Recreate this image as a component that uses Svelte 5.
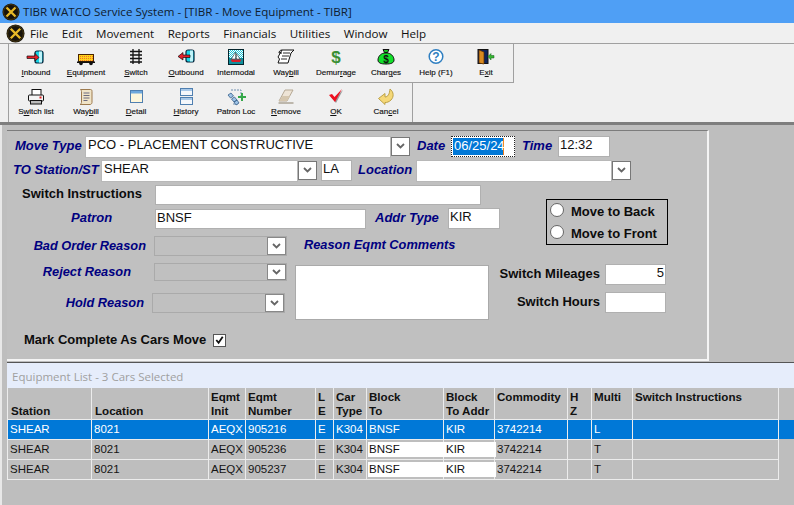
<script>
  const menu = ['File', 'Edit', 'Movement', 'Reports', 'Financials', 'Utilities', 'Window', 'Help'];
  const row1 = [
    ['inbound', '', 'I', 'nbound'], ['car', '', 'E', 'quipment'], ['switch', '', 'S', 'witch'], ['outbound', '', 'O', 'utbound'],
    ['boat', 'Intermodal', '', ''], ['scroll', 'Way', 'b', 'ill'], ['dollar', 'Demur', 'r', 'age'], ['bag', 'Char', 'g', 'es'],
    ['help', 'Help (F1)', '', ''], ['exit', 'E', 'x', 'it']
  ];
  const row2 = [
    ['printer', 'S', 'w', 'itch list'], ['tan', 'Way', 'b', 'ill'], ['detail', '', 'D', 'etail'], ['history', '', 'H', 'istory'],
    ['patron', 'Patron Loc', '', ''], ['eraser', '', 'R', 'emove'], ['check', '', 'O', 'K'], ['cancel', 'Can', 'c', 'el']
  ];
  const head = [
    ['Station'], ['Location'], ['Eqmt', 'Init'], ['Eqmt', 'Number'], ['L', 'E'], ['Car', 'Type'], ['Block', 'To'],
    ['Block', 'To Addr'], ['Commodity', ''], ['H', 'Z'], ['Multi', ''], ['Switch Instructions', '']
  ];
  const rows = [
    ['905216', 'L'],
    ['905236', 'T'],
    ['905237', 'T']
  ];
</script>

{#snippet icon(name)}
  <svg class="ico" width="24" height="20" viewBox="0 0 24 20" aria-hidden="true">
    {#if name === 'inbound'}
      <rect x="11" y="3" width="8" height="12" rx="2" fill="#19d5e6" stroke="#05233a" stroke-width="1.2" />
      <path d="M15 3.500h3v11h-3z" fill="#bff4fa" />
      <path d="M3 8h8V5.500L15 9.500 11 13v-2.500H3z" fill="#e5202a" stroke="#111" stroke-width=".7" />
    {:else if name === 'car'}
      <rect x="4.500" y="6.500" width="15" height="7" fill="url(#chk)" stroke="#4a2400" stroke-width="1" />
      <path d="M3 13.500h18V15H3z" fill="#111" />
      <circle cx="7" cy="15.500" r="1.800" fill="#111" /><circle cx="17" cy="15.500" r="1.800" fill="#111" />
    {:else if name === 'switch'}
      <path d="M9 1v15M15 1v15M6 3.500h12M6 7h12M6 10.500h12M6 14h12" stroke="#111" stroke-width="1.300" fill="none" />
    {:else if name === 'outbound'}
      <rect x="12" y="2" width="8" height="12" rx="2" fill="#19d5e6" stroke="#05233a" stroke-width="1.200" />
      <path d="M16 2.500h3v11h-3z" fill="#bff4fa" />
      <path d="M16 7H9V4.500L4 8.500 9 12V9.500h7z" fill="#e5202a" stroke="#111" stroke-width=".7" />
    {:else if name === 'boat'}
      <rect x="4.500" y="1.500" width="15" height="15" fill="url(#sea)" stroke="#04242c" stroke-width="1" />
      <rect x="5" y="10" width="14" height="6" fill="#0f8f9c" />
      <path d="M11.500 4v7H7.500zM12.500 5.500l3.500 5.500h-3.500z" fill="#fff" stroke="#222" stroke-width=".5" />
      <path d="M6.500 11.500h11L16 14H8z" fill="#d81e28" />
    {:else if name === 'scroll'}
      <path d="M8 2h12l-3 3-3 10H4l1.500-4L4 9zM8 2c-2 0-3 1.500-3 3h3" fill="#fff" stroke="#111" stroke-width="1" />
      <path d="M9 5h7M8 8h7M7 11h6" stroke="#111" stroke-width=".9" />
    {:else if name === 'dollar'}
      <text x="12" y="15" text-anchor="middle" class="dollar">$</text>
    {:else if name === 'bag'}
      <path d="M9 1.500h6l-1.500 3h-3z" fill="#15c421" stroke="#111" />
      <path d="M10 5h4c4 1 6 4 6 7 0 3-3 4-8 4s-8-1-8-4c0-3 2-6 6-7z" fill="#12e02a" stroke="#111" />
      <text x="12" y="14.500" text-anchor="middle" class="bagd">$</text>
    {:else if name === 'help'}
      <circle cx="12" cy="8.500" r="6.800" fill="#fff" stroke="#2f7fc1" stroke-width="1.500" />
      <text x="12" y="12.800" text-anchor="middle" class="q">?</text>
    {:else if name === 'exit'}
      <rect x="4" y="1.500" width="10" height="14" fill="#10245c" stroke="#111" />
      <path d="M5 2l5 2v12l-5-1z" fill="#d98a20" stroke="#5a2c00" stroke-width=".7" />
      <path d="M14 8.500l3-3v2h3v2.500h-3v2z" fill="#35b531" stroke="#14601a" stroke-width=".5" />
    {:else if name === 'printer'}
      <rect x="8" y="1.500" width="9" height="6" fill="#fff" stroke="#111" />
      <rect x="4.500" y="7" width="15" height="6" rx="1" fill="#f4f4f4" stroke="#111" />
      <rect x="6.500" y="12.500" width="11" height="3.500" fill="#bbb" stroke="#111" />
      <rect x="15.500" y="8.500" width="2" height="2" fill="#e02020" />
    {:else if name === 'tan'}
      <path d="M6.500 1.500h10c1 0 1.500 .5 1.500 2v11c0 1-1 2-2 2H6c1-.5 1.500-1 1.500-2V3.500c0-1-.5-1.500-1-2z" fill="#f0e4c8" stroke="#9d7b4f" />
      <path d="M9.500 5h6M9.500 7.500h6M9.500 10h6M9.500 12.500h4" stroke="#6b6b80" stroke-width="1" />
    {:else if name === 'detail'}
      <rect x="6.500" y="2.500" width="12" height="12" fill="#fdf6dc" stroke="#4f7fb0" />
      <rect x="7" y="3" width="11" height="2.500" fill="#6fa8dc" />
    {:else if name === 'history'}
      <rect x="6.500" y=".5" width="12" height="7" fill="#f4f7fb" stroke="#4f7fb0" />
      <rect x="7" y="1" width="11" height="2" fill="#a8c8e8" />
      <rect x="6.500" y="9.500" width="12" height="7" fill="#f4f7fb" stroke="#4f7fb0" />
      <rect x="7" y="10" width="11" height="2" fill="#a8c8e8" />
    {:else if name === 'patron'}
      <path d="M7 2h10v8M14 16H8" stroke="#6f8fb0" stroke-dasharray="2 1" fill="none" />
      <path d="M4 7l3-2 2.500 3-3 2zM7.500 11l3-2 2.500 3-3 2zM10 14l3-2 2 3-3 2z" fill="#9fc4e8" stroke="#37608a" stroke-width=".8" />
      <path d="M17 5h2v3h3v2h-3v3h-2v-3h-3V8h3z" fill="#35a84a" />
    {:else if name === 'eraser'}
      <path d="M11 2h8l-6 11H5z" fill="#eee4d6" stroke="#b5a894" />
      <path d="M8.500 8h7.500l-3 5H5z" fill="#d5c6ae" />
      <path d="M4.500 15h15" stroke="#9a917f" stroke-width="1.200" />
    {:else if name === 'check'}
      <path d="M6.500 8.500L12 15l7-13-8.500 8-2-2.500z" fill="#9a9a9a" />
      <path d="M5 7l6 7 7-13-7.500 8L8 6z" fill="#ee1020" />
    {:else if name === 'cancel'}
      <path d="M16 1c4 3 4 8 1 11-2 2-4 2.500-6 2.500v2L4.500 10.500 11 5.500v3.500c3 0 4.500-3 5-8z" fill="#f5d878" stroke="#b69a3c" stroke-width=".9" />
    {/if}
  </svg>
{/snippet}

{#snippet logo(cls)}
  <svg class={cls} width="20" height="20" viewBox="0 0 20 20" aria-hidden="true">
    <circle cx="10" cy="10" r="9.500" fill="#17130b" />
    <path d="M5 5l10 10M15 5L5 15" stroke="#e7b928" stroke-width="2.600" />
    <circle cx="10" cy="10" r="8.300" fill="none" stroke="#4a3a10" stroke-width="1" />
  </svg>
{/snippet}

{#snippet btn(item)}
  <div class="tb">
    {@render icon(item[0])}
    <span class="tl">{item[1]}<u>{item[2]}</u>{item[3]}</span>
  </div>
{/snippet}

{#snippet chev()}
  <svg width="9" height="6" viewBox="0 0 9 6" aria-hidden="true"><path d="M1 1l3.500 3.500L8 1" fill="none" stroke="#666" stroke-width="1.800" /></svg>
{/snippet}

<div class="app">
  <div class="title">
    {@render logo('lg1')}
    <span>TIBR WATCO Service System - [TIBR - Move Equipment - TIBR]</span>
  </div>
  <div class="menu">
    {@render logo('lg2')}
    {#each menu as m}<span class="mi">{m}</span>{/each}
  </div>

  <div class="bars">
    <div class="bar b1">{#each row1 as it}{@render btn(it)}{/each}</div>
    <div class="bar b2">{#each row2 as it}{@render btn(it)}{/each}</div>
  </div>

  <div class="body">
    <div class="strip"></div>
    <div class="main">
      <div class="gap"></div>
      <div class="top">
        <form class="panel" onsubmit={(e) => e.preventDefault()}>
          <div class="frow r1">
            <span class="nl w1">Move Type</span>
            <div class="combo c1"><span class="fld">PCO - PLACEMENT CONSTRUCTIVE</span><span class="dd">{@render chev()}</span></div>
            <span class="nl date">Date</span>
            <div class="focus"><span class="sel">06/25/24</span></div>
            <span class="nl time">Time</span>
            <span class="inp t">12:32</span>
          </div>
          <div class="frow r2">
            <span class="nl w2">TO Station/ST</span>
            <div class="combo c2"><span class="fld">SHEAR</span><span class="dd">{@render chev()}</span></div>
            <span class="inp st">LA</span>
            <span class="nl loc">Location</span>
            <div class="combo c3"><span class="fld"></span><span class="dd">{@render chev()}</span></div>
          </div>
          <div class="frow r3">
            <span class="bl w3">Switch Instructions</span>
            <span class="inp si"></span>
          </div>
          <div class="frow r4">
            <span class="nl w4">Patron</span>
            <span class="inp pa">BNSF</span>
            <span class="nl ad">Addr Type</span>
            <span class="inp at">KIR</span>
          </div>

          <div class="lower">
            <div class="lcol">
              <div class="lrow lr1"><span class="nl lw1">Bad Order Reason</span><div class="dcombo"><span class="dd">{@render chev()}</span></div></div>
              <div class="lrow lr2"><span class="nl lw2">Reject Reason</span><div class="dcombo short"><span class="dd sm">{@render chev()}</span></div></div>
              <div class="lrow lr3"><span class="nl lw3">Hold Reason</span><div class="dcombo"><span class="dd">{@render chev()}</span></div></div>
            </div>
            <div class="mcol">
              <span class="nl rc">Reason Eqmt Comments</span>
              <div class="ta"></div>
            </div>
            <div class="rcol">
              <div class="rr rr1"><span class="bl rl">Switch Mileages</span><span class="inp num">5</span></div>
              <div class="rr rr2"><span class="bl rl">Switch Hours</span><span class="inp num"></span></div>
            </div>
          </div>

          <div class="mark">
            <span class="bl">Mark Complete As Cars Move</span>
            <span class="cb"><svg width="12" height="12" viewBox="0 0 12 12" aria-hidden="true"><path d="M2.500 6l2.500 3 4.500-6.500" fill="none" stroke="#111" stroke-width="2" /></svg></span>
          </div>

          <div class="movebox">
            <div class="mv"><span class="rd"></span><span class="bl">Move to Back</span></div>
            <div class="mv"><span class="rd"></span><span class="bl">Move to Front</span></div>
          </div>
        </form>
      </div>

      <div class="list">
        <div class="lt">Equipment List - 3 Cars Selected</div>
        <div class="grid">
          <div class="gr hd">
            {#each head as h}
              <div class="hc">
                <span>{h[0]}</span>{#if h.length > 1}<span>{h[1]}&nbsp;</span>{/if}
              </div>
            {/each}
          </div>
          {#each rows as r, i}
            <div class="gr dr" class:on={i === 0}>
              <div class="c">SHEAR</div><div class="c">8021</div><div class="c">AEQX</div><div class="c">{r[0]}</div>
              <div class="c">E</div><div class="c">K304</div>
              <div class="c"><span class:edit={i > 0}>BNSF</span></div>
              <div class="c"><span class:edit={i > 0}>KIR</span></div>
              <div class="c">3742214</div><div class="c"></div><div class="c">{r[1]}</div><div class="c"></div>
            </div>
          {/each}
        </div>
      </div>
    </div>
  </div>

  <svg class="defs" width="0" height="0" aria-hidden="true">
    <defs>
      <pattern id="chk" width="2" height="2" patternUnits="userSpaceOnUse">
        <rect width="2" height="2" fill="#ffd21a" /><rect width="1" height="1" fill="#f2702a" />
      </pattern>
      <pattern id="sea" width="2" height="2" patternUnits="userSpaceOnUse">
        <rect width="2" height="2" fill="#fff" /><rect width="1" height="1" fill="#1fc6d8" /><rect x="1" y="1" width="1" height="1" fill="#1fc6d8" />
      </pattern>
    </defs>
  </svg>
</div>

<style>
  :global(body) { margin: 0; }
  .app { width: 794px; height: 505px; overflow: hidden; background: #bebebe; display: flex; flex-direction: column; font-family: "Liberation Sans", Arial, sans-serif; color: #000; position: relative; }
  .defs { position: absolute; }

  .title { height: 23px; background: #4f9ff5; display: flex; align-items: center; font: 11.600px "Open Sans", sans-serif; color: #10202f; flex: none; }
  .lg1 { margin-left: 2px; width: 18px; height: 18px; margin-right: 3px; }
  .menu { height: 20px; background: #f0f0f0; border-bottom: 1px solid #a0a0a0; display: flex; align-items: center; font: 11.600px "Open Sans", sans-serif; color: #111; flex: none; }
  .lg2 { margin-left: 6px; width: 19px; height: 19px; margin-right: 5px; }
  .mi { margin-right: 13.500px; }

  .bars { flex: none; height: 78px; background: #f0f0f0; border-bottom: 3px solid #7e7e7e; box-sizing: content-box; padding-left: 8px; position: relative; }
  .bar { display: flex; padding-left: 2px; box-sizing: border-box; border-left: 1px solid #a0a0a0; }
  .b1 { width: 506px; height: 39px; border-bottom: 1px solid #a0a0a0; border-right: 1px solid #a0a0a0; }
  .b2 { width: 405px; height: 39px; border-right: 1px solid #a0a0a0; }
  .tb { width: 50px; flex: none; display: flex; flex-direction: column; align-items: center; padding-top: 4px; box-sizing: border-box; }
  .ico { display: block; height: 20px; flex: none; }
  .tl { font-size: 8px; line-height: 10px; margin-top: 0; white-space: nowrap; color: #111; -webkit-text-stroke: .15px #111; }
  .b2 .ico { margin-top: 1px; }
  .b2 .tl { margin-top: -1px; }
  .dollar { font: bold 17px "Liberation Sans", sans-serif; fill: #3a8f34; }
  .bagd { font: bold 10px "Liberation Sans", sans-serif; fill: #111; }
  .q { font: bold 12px "Liberation Sans", sans-serif; fill: #2f7fc1; }

  .body { flex: 1; display: flex; min-height: 0; }
  .strip { width: 5px; border-left: 2px solid #e8e8e8; background: #bebebe; box-sizing: content-box; flex: none; }
  .main { flex: 1; display: flex; flex-direction: column; min-width: 0; }
  .gap { height: 5px; flex: none; }
  .top { flex: none; height: 232px; border-bottom: 1px solid #555; box-sizing: content-box; }
  .panel { width: 702px; height: 231px; box-sizing: border-box; border-top: 1px solid #7c7c7c; border-right: 2px solid #f4f4f4; border-bottom: 2px solid #f4f4f4; background: #c0c0c0; position: relative; }

  .nl { font: italic bold 13px "Liberation Sans", sans-serif; color: #000080; white-space: nowrap; margin-top: -2px; }
  .bl { font: bold 13px "Liberation Sans", sans-serif; color: #0c0c0c; white-space: nowrap; margin-top: -2px; }
  .frow { display: flex; align-items: center; height: 21px; }
  .inp, .fld { display: block; box-sizing: border-box; background: #fff; border: 1px solid #b0b0b0; font-size: 13px; line-height: 16px; padding-left: 1px; white-space: nowrap; overflow: hidden; color: #111; }
  .combo { display: flex; height: 20px; }
  .fld { flex: 1; height: 20px; border: 0; outline: 1px solid #b8b8b8; outline-offset: 0; padding-left: 2px; }
  .dd { width: 19px; height: 19px; box-sizing: border-box; flex: none; background: #fff; border: 1px solid #777; display: flex; align-items: center; justify-content: center; margin-left: 1px; }

  .r1 { margin-top: 5px; }
  .w1 { margin-left: 8px; width: 71px; }
  .c1 { width: 324px; }
  .date { margin-left: 7px; width: 34px; }
  .focus { width: 64px; height: 21px; box-sizing: border-box; border: 1px dotted #222; background: #fff; padding: 1px; }
  .sel { display: block; height: 17px; width: 49px; background: #0078d7; color: #fff; font-size: 13px; line-height: 16px; border-right: 1px solid #f08020; padding-left: 1px; box-sizing: content-box; }
  .time { margin-left: 7px; width: 36px; }
  .t { width: 52px; height: 21px; }

  .r2 { margin-top: 3px; }
  .w2 { margin-left: 6px; width: 89px; }
  .c2 { width: 215px; }
  .st { width: 31px; height: 21px; margin-left: 4px; line-height: 15px; }
  .loc { margin-left: 6px; width: 59px; }
  .c3 { width: 214px; }

  .r3 { margin-top: 3px; }
  .w3 { margin-left: 15px; width: 133px; }
  .si { width: 326px; height: 20px; }
  .r4 { margin-top: 3px; }
  .w4 { margin-left: 64px; width: 84px; }
  .pa { width: 211px; height: 20px; }
  .ad { margin-left: 9px; width: 73px; }
  .at { width: 52px; height: 21px; }

  .lower { display: flex; margin-top: 7px; height: 90px; }
  .lcol { width: 288px; flex: none; display: flex; flex-direction: column; }
  .lcol .nl, .rc { font-size: 12.800px; }
  .lrow { display: flex; align-items: center; justify-content: flex-end; height: 20px; padding-right: 8px; }
  .lr2 { margin-top: 7px; height: 18px; }
  .lr3 { margin-top: 12px; padding-right: 10px; }
  .lw1 { margin-right: 8px; }
  .lw2 { margin-right: 23px; }
  .lw3 { margin-right: 8px; }
  .dcombo { width: 133px; height: 20px; box-sizing: border-box; border: 1px solid #aaa; display: flex; justify-content: flex-end; }
  .short { height: 18px; }
  .dcombo .dd { width: 19px; height: 18px; border-color: #888; }
  .dcombo .sm { height: 16px; }
  .mcol { width: 202px; flex: none; }
  .rc { display: block; margin-left: 9px; margin-top: 0; line-height: 18px; height: 29px; }
  .ta { width: 194px; height: 55px; box-sizing: border-box; background: #fff; border: 1px solid #aaa; }
  .rcol { width: 169px; flex: none; }
  .rr { display: flex; align-items: center; justify-content: flex-end; width: 169px; }
  .rr1 { margin-top: 28px; }
  .rr2 { margin-top: 7px; }
  .rl { margin-right: 5px; }
  .num { width: 61px; height: 21px; text-align: right; padding-right: 1px; }

  .mark { display: flex; align-items: center; margin: 5px 0 0 17px; height: 18px; }
  .cb { width: 13px; height: 13px; box-sizing: border-box; background: #fff; border: 1px solid #555; margin-left: 7px; display: flex; align-items: center; justify-content: center; }

  .movebox { position: absolute; left: 539px; top: 68px; width: 122px; height: 46px; box-sizing: border-box; border: 1px solid #000; padding-top: 1px; }
  .mv { display: flex; align-items: center; height: 22px; }
  .rd { width: 12px; height: 12px; border-radius: 50%; background: #fff; border: 1px solid #666; margin: -4px 7px 0 3px; flex: none; }

  .list { flex: 1; display: flex; flex-direction: column; min-height: 0; }
  .lt { height: 25px; background: #e6edfb; color: #a0a0a0; font: 11.500px/27px "Open Sans", sans-serif; padding-left: 5px; flex: none; }
  .grid { flex: 1; background: #bebebe; }
  .gr { display: grid; grid-template-columns: 84px 117px 37px 70px 18px 33px 77px 51px 73px 24px 41px 146px; width: 771px; border-bottom: 1px solid #ececec; border-left: 1px solid #ececec; box-sizing: content-box; position: relative; }
  .hd { height: 31px; }
  .hc { border-right: 1px solid #ececec; font: bold 11.600px/14px "Liberation Sans", sans-serif; padding: 2px 0 0 2px; box-sizing: border-box; display: flex; flex-direction: column; white-space: nowrap; color: #111; overflow: hidden; }
  .hc:nth-child(1), .hc:nth-child(2) { padding-left: 3px; padding-top: 16px; }
  .dr { height: 19px; }
  .c { border-right: 1px solid #ececec; font-size: 11.500px; line-height: 19px; padding-left: 2px; box-sizing: border-box; white-space: nowrap; color: #151515; }
  .on { background: #0078d7; }
  .on .c { color: #fff; }
  .on::after { content: ""; position: absolute; left: 771px; top: 0; width: 20px; height: 19px; background: #0078d7; }
  .edit { display: block; background: #fff; line-height: 15px; margin: 2px -2px 2px -1px; padding-left: 1px; color: #111; }
</style>
